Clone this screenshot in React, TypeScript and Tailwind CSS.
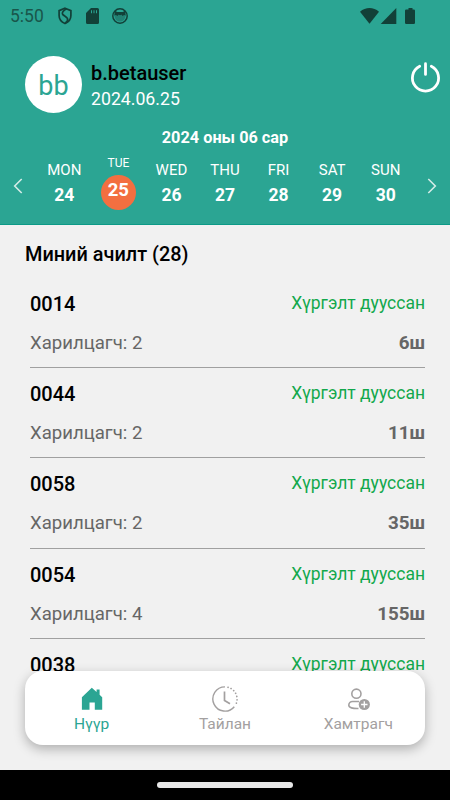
import React from 'react';

const days = [
  { name: 'MON', date: '24' },
  { name: 'TUE', date: '25', active: true },
  { name: 'WED', date: '26' },
  { name: 'THU', date: '27' },
  { name: 'FRI', date: '28' },
  { name: 'SAT', date: '29' },
  { name: 'SUN', date: '30' },
];

const loads = [
  { id: '0014', customers: 2, qty: 6 },
  { id: '0044', customers: 2, qty: 11 },
  { id: '0058', customers: 2, qty: 35 },
  { id: '0054', customers: 4, qty: 155 },
  { id: '0038', customers: 3, qty: 24 },
];

function StatusBar() {
  return (
    <div className="flex h-8 items-center pl-[10px] text-[#124038]">
      <span className="w-[48px] text-[17.500px] leading-8 text-[#19564b]">5:50</span>
      <svg className="h-[18px] w-[14px]" viewBox="0 0 14 18" fill="none" stroke="currentColor" strokeWidth="1.7">
        <path d="M7 1.200 12.900 3.600V8.500c0 3.800-2.400 6.600-5.900 8-3.500-1.400-5.900-4.200-5.900-8V3.600Z" />
        <path d="M8.500 1.800C5.500 3.500 3.600 5.600 4.600 7.200c.9 1.400 3.800 2.300 4.800 4.100.8 1.500-.4 3.400-2 4.700" />
      </svg>
      <svg className="ml-[14px] h-4 w-[13px]" viewBox="0 0 13 16" fill="currentColor">
        <path fillRule="evenodd" d="M5 0h6.500A1.500 1.500 0 0 1 13 1.500v13a1.500 1.500 0 0 1-1.500 1.500h-10A1.500 1.500 0 0 1 0 14.500V5Zm0 2.300v3h1v-3Zm2.500 0v3h1v-3Zm2.500 0v3h1v-3Z" />
      </svg>
      <svg className="ml-[13px] h-4 w-4" viewBox="0 0 16 16">
        <circle cx="8" cy="8" r="7.200" fill="none" stroke="currentColor" strokeWidth="1.500" />
        <path fill="currentColor" d="M3 2.800 5.200 4h5.600L13 2.800l.8 4.700-1.800-.6-1.300 1-1.300-1.200L8 7.300l-1.400-.6-1.300 1.200-1.300-1-1.800.6Z" />
        <path fill="currentColor" opacity=".35" d="M2.500 7h11c0 4-2 6.500-5.500 6.500S2.500 11 2.500 7Z" />
      </svg>
      <svg className="ml-auto mr-[34px] h-4 w-[56px]" viewBox="0 0 56 16" fill="currentColor">
        <path d="M0 3.700C5.500-1.200 13.500-1.200 19 3.700L9.500 15.700Z" />
        <path d="M36.300 0v16H20.700Z" />
        <path d="M48.500 0h4v1.500h1.300A1.200 1.200 0 0 1 55 2.700v12.100a1.200 1.200 0 0 1-1.200 1.200h-7.600a1.200 1.200 0 0 1-1.200-1.200V2.700a1.200 1.200 0 0 1 1.200-1.200h2.300Z" />
      </svg>
    </div>
  );
}

function Chevron({ flip = false }: { flip?: boolean }) {
  return (
    <svg className="mt-[24px] h-4 w-[10px]" viewBox="0 0 10 16" fill="none" stroke="#d4ece7" strokeWidth="1.600">
      <path d={flip ? 'M1.300 1 8.300 8l-7 7' : 'M8.700 1 1.700 8l7 7'} />
    </svg>
  );
}

function Header() {
  return (
    <header className="h-[225px] border-b border-[#0c9a87] bg-[#2ba593] text-white">
      <StatusBar />
      <div className="flex h-[90px] pl-[25px] pt-6">
        <div className="flex h-[57px] w-[57px] justify-center rounded-full bg-white text-[27px] leading-[61px] text-[#2ba593]">bb</div>
        <div className="ml-[9px]">
          <div className="mt-[5px] text-[20px] font-medium leading-6 text-black">b.betauser</div>
          <div className="mt-[2px] text-[17.700px] leading-6">2024.06.25</div>
        </div>
        <svg className="ml-auto mr-[8px] mt-[5px] h-8 w-[33px]" viewBox="0 0 33 32" fill="none" stroke="white" strokeWidth="2.800" strokeLinecap="round">
          <path d="M16.500 2.700v10.700M10.700 5.300a13.100 13.100 0 1 0 11.600 0" />
        </svg>
      </div>
      <div className="h-[35px] text-center text-[16.300px] font-bold leading-8">2024 оны 06 сар</div>
      <div className="-mt-[3px] flex justify-between px-[13px]">
        <Chevron />
        <div className="grid w-[375px] grid-cols-7">
          {days.map((d) =>
            d.active ? (
              <div key={d.name} className="flex flex-col items-center">
                <span className="h-[21px] pl-px text-[12px] leading-[18px]">{d.name}</span>
                <span className="ml-px h-[35px] w-[35px] rounded-full bg-[#f36f40] text-center text-[18.500px] font-bold leading-[31px]">{d.date}</span>
              </div>
            ) : (
              <div key={d.name} className="flex flex-col items-center">
                <span className="h-[30px] text-[15px] leading-8">{d.name}</span>
                <span className="text-[17.500px] font-bold leading-[22px]">{d.date}</span>
              </div>
            ),
          )}
        </div>
        <Chevron flip />
      </div>
    </header>
  );
}

function LoadRow({ id, customers, qty }: { id: string; customers: number; qty: number }) {
  return (
    <div className="h-[90.400px] border-b border-[#a0a0a0] pt-[13px]">
      <div className="flex justify-between">
        <span className="text-[20px] font-medium leading-[26px] text-black">{id}</span>
        <span className="text-[17.500px] leading-6 text-[#12a84c]">Хүргэлт дууссан</span>
      </div>
      <div className="mt-[13px] flex justify-between text-[#666]">
        <span className="text-[18.600px] leading-[26px]">Харилцагч: {customers}</span>
        <span className="text-[18.800px] font-bold leading-[26px]">{qty}ш</span>
      </div>
    </div>
  );
}

function BottomNav() {
  return (
    <nav className="absolute left-[25px] top-[671px] grid h-[74px] w-[400px] grid-cols-3 rounded-[18px] bg-white text-[15.500px] text-[#a3a0a0] shadow-[0_4px_12px_rgba(0,0,0,0.28)]">
      <div className="flex flex-col items-center pt-[15px] text-[#2ba593]">
        <svg className="h-[26px] w-[22px]" viewBox="0 0 22 26" fill="currentColor">
          <path d="M10.800 1.700 15.600 6V3.600h3V8.800L21.200 11.300V23.800H13.800V16.500H8.500V23.800H.9V11.300Z" />
        </svg>
        <span className="leading-6">Нүүр</span>
      </div>
      <div className="flex flex-col items-center pt-[15px]">
        <svg className="h-[26px] w-[26px]" viewBox="0 0 26 26" fill="none" stroke="currentColor" strokeWidth="1.400">
          <path d="M13 .9a12.100 12.100 0 1 0 9.300 19.800" />
          <path d="M16 1.300A12.100 12.100 0 0 1 24 18" strokeWidth="1.700" strokeLinecap="round" strokeDasharray="0.100 3.200" />
          <path d="M12.500 5.500v9l5.500 3.300" strokeWidth="1.700" />
        </svg>
        <span className="leading-6">Тайлан</span>
      </div>
      <div className="flex flex-col items-center pt-[15px]">
        <svg className="h-[26px] w-[24px]" viewBox="0 0 24 26" fill="none" stroke="currentColor" strokeWidth="1.600">
          <circle cx="10.400" cy="7.700" r="4.600" />
          <path d="M13 15.500H6.500a3.700 3.700 0 0 0-3.700 3.700c0 2.500 4 3.500 9.700 3.300" />
          <circle cx="18.300" cy="18.500" r="5.600" fill="currentColor" stroke="none" />
          <path d="M18.300 15.300v6.400M15.100 18.500h6.400" stroke="white" strokeWidth="1.300" />
        </svg>
        <span className="leading-6">Хамтрагч</span>
      </div>
    </nav>
  );
}

export default function App() {
  return (
    <div className="relative flex h-[800px] w-[450px] flex-col overflow-hidden bg-[#f1f1f1] font-[Roboto,sans-serif]">
      <Header />
      <main className="h-[446px] overflow-hidden">
        <h1 className="h-[52.600px] pl-[25px] text-[19.900px] font-medium leading-[60px] text-black">Миний ачилт (28)</h1>
        <div className="pl-[30px] pr-[25px]">
          {loads.map((l) => (
            <LoadRow key={l.id} {...l} />
          ))}
        </div>
      </main>
      <BottomNav />
      <footer className="mt-auto flex h-[30px] justify-center bg-black pt-[12px]">
        <div className="h-[6px] w-[136px] rounded-full bg-[#e8e8e8]" />
      </footer>
    </div>
  );
}
